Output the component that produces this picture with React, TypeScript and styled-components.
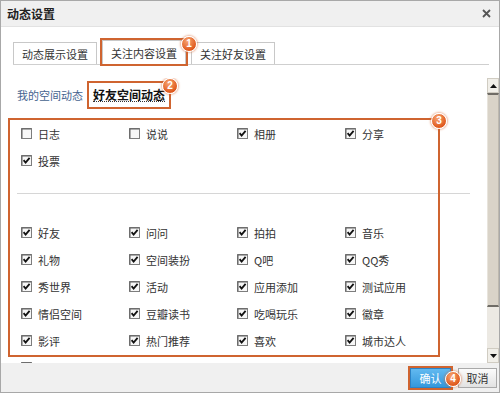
import React from 'react';
import styled, { createGlobalStyle } from 'styled-components';

const MARK = '#cf6430';
const FONT = '"Noto Sans CJK SC", "Noto Sans", sans-serif';

const GlobalStyle = createGlobalStyle`
  html, body { margin: 0; padding: 0; background: #fff; }
`;

const Dialog = styled.div`
  position: relative;
  width: 500px;
  height: 393px;
  box-sizing: border-box;
  border: 1px solid #a8a8a8;
  background: #fff;
  display: flex;
  flex-direction: column;
  overflow: hidden;
  font-family: ${FONT};
  font-size: 11px;
  color: #333;
`;

const TitleBar = styled.div`
  flex: 0 0 25px;
  display: flex;
  align-items: center;
  justify-content: space-between;
  padding: 0 8px 0 6px;
  background: #f0f0f0;
  border-bottom: 1px solid #e2e2e2;
  font-size: 12px;
  font-weight: bold;
  color: #222;
`;

const TabStrip = styled.div`
  display: flex;
  align-items: flex-end;
  gap: 5px;
  margin: 13px 10px 0 12px;
  border-bottom: 1px solid #cfcfcf;
`;

const Tab = styled.div<{ $active?: boolean }>`
  position: relative;
  width: 84px;
  height: ${p => (p.$active ? 24 : 22)}px;
  box-sizing: border-box;
  display: flex;
  align-items: center;
  justify-content: center;
  border: 1px solid #c8c8c8;
  border-bottom: none;
  background: #fff;
  color: #333;
  outline: ${p => (p.$active ? `2px solid ${MARK}` : 'none')};
`;

const Badge = styled.span<{ $x: number; $y: number }>`
  position: absolute;
  left: ${p => p.$x}px;
  top: ${p => p.$y}px;
  transform: translate(-50%, -50%);
  width: 14px;
  height: 14px;
  border-radius: 50%;
  border: 1.5px solid #fff;
  box-shadow: 0 0 2px 1px rgba(214, 96, 40, 0.45);
  background: radial-gradient(circle at 40% 30%, #f7a470, #e0591d 70%);
  color: #fff;
  font-family: "Liberation Sans", Arial, sans-serif;
  font-size: 10px;
  font-weight: bold;
  line-height: 14px;
  text-align: center;
  z-index: 2;
`;

const Body = styled.div`
  flex: 1;
  min-height: 0;
  display: flex;
  margin-top: 13px;
`;

const Content = styled.div`
  flex: 1;
  overflow: hidden;
`;

const SubTabs = styled.div`
  display: flex;
  align-items: center;
  height: 22px;
  margin-top: 6px;
  padding-left: 16px;
`;

const SubLink = styled.span`
  color: #45638f;
`;

const SubCurrent = styled.span`
  position: relative;
  margin-left: 7px;
  height: 22px;
  padding: 0 3px;
  display: flex;
  align-items: center;
  font-size: 12px;
  font-weight: bold;
  color: #111;
  outline: 2px solid ${MARK};
  outline-offset: 1px;

  & > em {
    font-style: normal;
    border-bottom: 1px dotted #333;
    line-height: 13px;
  }
`;

const Panel = styled.div`
  position: relative;
  margin-top: 14px;

  &::after {
    content: '';
    position: absolute;
    top: -2px;
    left: 7px;
    width: 432px;
    height: 239px;
    box-sizing: border-box;
    border: 2px solid ${MARK};
    pointer-events: none;
  }
`;

const Grid = styled.div`
  display: grid;
  grid-template-columns: repeat(4, 108px);
  grid-auto-rows: 27px;
  padding-left: 20px;
`;

const Item = styled.label`
  display: flex;
  align-items: center;
  gap: 6px;
  color: #333;
`;

const Separator = styled.div`
  height: 1px;
  margin: 19px 17px 25px 16px;
  background: #d6d6d6;
`;

const ScrollBar = styled.div`
  flex: 0 0 12px;
  display: flex;
  flex-direction: column;
`;

const ScrollButton = styled.div`
  flex: 0 0 15px;
  box-sizing: border-box;
  display: flex;
  align-items: center;
  justify-content: center;
  background: #f1efe9;
  border: 1px solid #d0ccc2;
`;

const Thumb = styled.div`
  flex: 0 0 214px;
  box-sizing: border-box;
  background: #d9d3c8;
  border-top: 2px solid #6f6c66;
  border-bottom: 2px solid #6f6c66;
  border-left: 1px solid #e8e4dc;
  border-right: 1px solid #bdb8ae;
`;

const Track = styled.div`
  flex: 1;
  background-color: #ece9e3;
  background-image: radial-gradient(#d9d5cc 0.6px, transparent 0.7px);
  background-size: 2px 2px;
`;

const Footer = styled.div`
  flex: 0 0 29px;
  display: flex;
  align-items: center;
  justify-content: flex-end;
  gap: 5px;
  padding-right: 2px;
  background: #f0f0f0;
`;

const Button = styled.button<{ $primary?: boolean }>`
  position: relative;
  width: ${p => (p.$primary ? 41 : 39)}px;
  height: 20px;
  padding: 0;
  box-sizing: border-box;
  font-family: ${FONT};
  font-size: 11px;
  border: 1px solid ${p => (p.$primary ? '#2c83c6' : '#a9a9a9')};
  color: ${p => (p.$primary ? '#fff' : '#333')};
  background: ${p =>
    p.$primary
      ? 'linear-gradient(#62b9f0, #3398dc)'
      : 'linear-gradient(#fbfbfb, #e2e2e2)'};
  outline: ${p => (p.$primary ? `2px solid ${MARK}` : 'none')};
  margin-right: ${p => (p.$primary ? 2 : 0)}px;
`;

function CheckBox({ checked }: { checked: boolean }) {
  return (
    <svg width="11" height="11" viewBox="0 0 11 11">
      <rect x="0.5" y="0.5" width="10" height="10" fill="#f7f7f7" stroke="#7d7d7d" />
      <path d="M1 1 H10" stroke="#5f5f5f" />
      <path d="M1 1 V10" stroke="#5f5f5f" />
      {checked && (
        <path d="M2.6 5.2 L4.6 7.6 L8.6 2.8" fill="none" stroke="#111" strokeWidth="1.8" />
      )}
    </svg>
  );
}

function CloseIcon() {
  return (
    <svg width="9" height="9" viewBox="0 0 9 9">
      <path d="M1 1 L8 8 M8 1 L1 8" stroke="#555" strokeWidth="1.8" />
    </svg>
  );
}

function Arrow({ up }: { up?: boolean }) {
  return (
    <svg width="7" height="4" viewBox="0 0 7 4">
      <path d={up ? 'M0 4 L3.5 0 L7 4 Z' : 'M0 0 L3.5 4 L7 0 Z'} fill="#111" />
    </svg>
  );
}

const mainItems: [string, boolean][] = [
  ['日志', false], ['说说', false], ['相册', true], ['分享', true],
  ['投票', true],
];

// the last entry sits below the fold, only its box edge peeks out
const appItems: [string, boolean][] = [
  ['好友', true], ['问问', true], ['拍拍', true], ['音乐', true],
  ['礼物', true], ['空间装扮', true], ['Q吧', true], ['QQ秀', true],
  ['秀世界', true], ['活动', true], ['应用添加', true], ['测试应用', true],
  ['情侣空间', true], ['豆瓣读书', true], ['吃喝玩乐', true], ['徽章', true],
  ['影评', true], ['热门推荐', true], ['喜欢', true], ['城市达人', true],
  ['', true],
];

function Options({ items }: { items: [string, boolean][] }) {
  return (
    <Grid>
      {items.map(([name, on], i) => (
        <Item key={i}>
          <CheckBox checked={on} />
          {name}
        </Item>
      ))}
    </Grid>
  );
}

export default function App() {
  return (
    <>
      <GlobalStyle />
      <Dialog>
        <TitleBar>
          动态设置
          <CloseIcon />
        </TitleBar>
        <TabStrip>
          <Tab>动态展示设置</Tab>
          <Tab $active>
            关注内容设置
            <Badge $x={86} $y={3}>1</Badge>
          </Tab>
          <Tab>关注好友设置</Tab>
        </TabStrip>
        <Body>
          <Content>
            <SubTabs>
              <SubLink>我的空间动态</SubLink>
              <SubCurrent>
                <em>好友空间动态</em>
                <Badge $x={80} $y={2}>2</Badge>
              </SubCurrent>
            </SubTabs>
            <Panel>
              <Badge $x={438} $y={1}>3</Badge>
              <Options items={mainItems} />
              <Separator />
              <Options items={appItems} />
            </Panel>
          </Content>
          <ScrollBar>
            <ScrollButton><Arrow up /></ScrollButton>
            <Thumb />
            <Track />
            <ScrollButton><Arrow /></ScrollButton>
          </ScrollBar>
        </Body>
        <Footer>
          <Button $primary>
            确认
            <Badge $x={42} $y={10}>4</Badge>
          </Button>
          <Button>取消</Button>
        </Footer>
      </Dialog>
    </>
  );
}
